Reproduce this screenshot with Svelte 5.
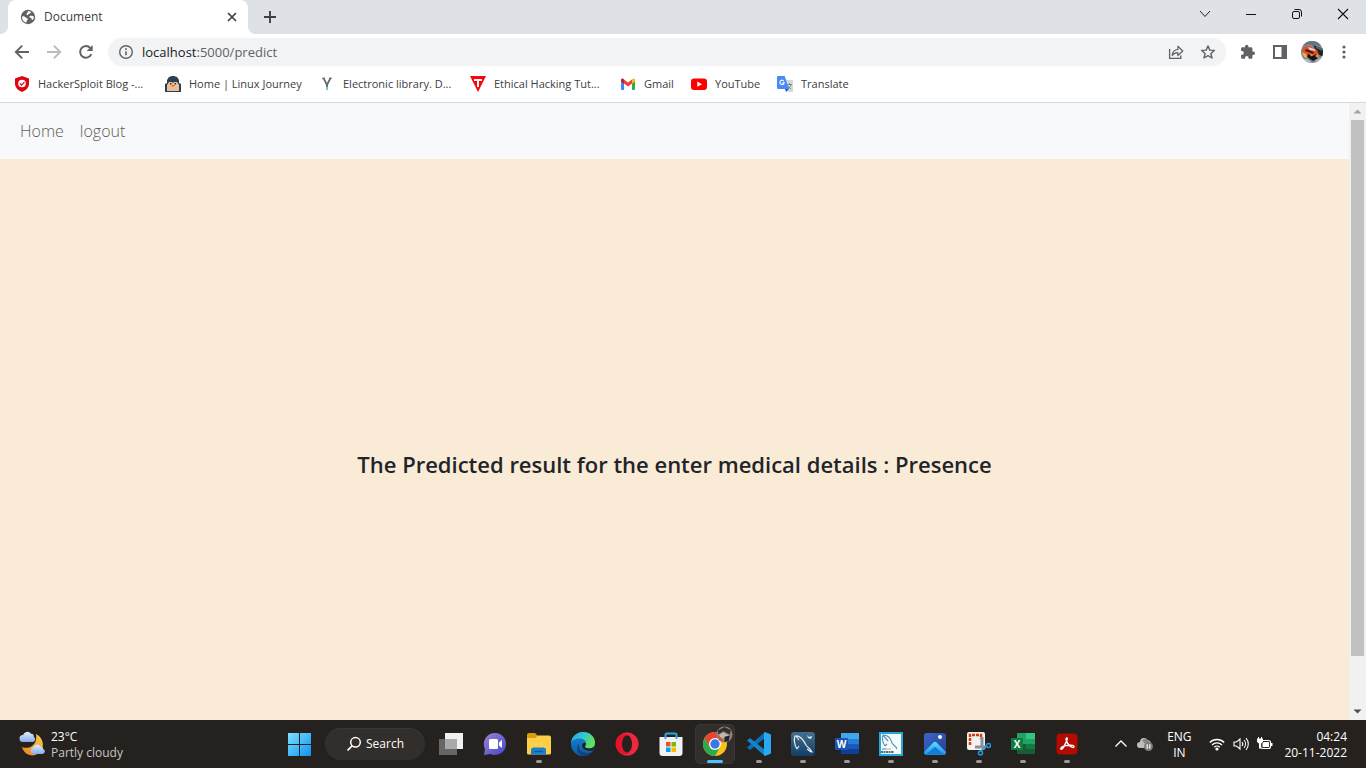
<script>
  let address = $state('localhost:5000/predict');
</script>

<div class="screen">
  <header class="browser">
    <div class="tabs">
      <div class="tab">
        <svg class="i16" viewBox="0 0 16 16" aria-hidden="true">
          <circle cx="8" cy="8" r="7.2" fill="#5f6368" />
          <path d="M2.2 7.2c1.8-.3 2.9.4 3.6 1.3.8 1 2 .4 1.9 1.8-.1 1.2-1.1 1-1.2 2.4v1A6 6 0 0 1 2.2 7.2zM8.2 2c1 .1 2.3.5 3.1 1-.9.5-.5 1.500-1.900 1.600-1 .1-.7 1.200-1.600 1.400-.7.2-1.300-.3-1.200-1 .1-1.400 1.300-1.200 1.600-3zM13.900 7.400c-1.700-1-4.400-.9-4.500.3 0 1.200 1.900.8 2.100 2 .1.800.5 1.200 1.100 1.300.9-1 1.400-2.200 1.300-3.600z" fill="#fff" />
        </svg>
        <span class="tab-title">Document</span>
        <button class="plain close" aria-label="Close tab">
          <svg class="i16" viewBox="0 0 16 16"><path d="M4 4l8 8M12 4l-8 8" stroke="#3c4043" stroke-width="1.7" /></svg>
        </button>
      </div>
      <button class="plain new-tab" aria-label="New tab">
        <svg class="i16" viewBox="0 0 16 16"><path d="M8 2v12M2 8h12" stroke="#3c4043" stroke-width="1.9" /></svg>
      </button>
      <div class="window-controls">
        <button class="plain" aria-label="Search tabs"><svg class="i16" viewBox="0 0 16 16"><path d="M3 5l5 5.500L13 5" fill="none" stroke="#222" /></svg></button>
        <button class="plain" aria-label="Minimize"><svg class="i16" viewBox="0 0 16 16"><path d="M3 8.500h10" stroke="#111" /></svg></button>
        <button class="plain" aria-label="Restore"><svg class="i16" viewBox="0 0 16 16"><rect x="3.500" y="5.500" width="7" height="7" rx="1.500" fill="none" stroke="#111" /><path d="M5.500 3.500H10A2.500 2.500 0 0 1 12.500 6v4.500" fill="none" stroke="#111" /></svg></button>
        <button class="plain" aria-label="Close window"><svg class="i16" viewBox="0 0 16 16"><path d="M3 3l10 10M13 3L3 13" stroke="#111" stroke-width="1.100" /></svg></button>
      </div>
    </div>

    <div class="toolbar">
      <button class="plain nav-btn" aria-label="Back"><svg class="i16" viewBox="0 0 16 16"><path d="M15 8H2M8.200 1.600L1.800 8l6.400 6.400" fill="none" stroke="#5f6368" stroke-width="1.900" /></svg></button>
      <button class="plain nav-btn" aria-label="Forward" disabled><svg class="i16" viewBox="0 0 16 16"><path d="M1 8h13M7.800 1.600L14.200 8l-6.400 6.400" fill="none" stroke="#babcbe" stroke-width="1.900" /></svg></button>
      <button class="plain nav-btn" aria-label="Reload"><svg class="i16" viewBox="0 0 16 16"><path d="M13.300 10.200A5.800 5.800 0 1 1 12.300 4" fill="none" stroke="#5f6368" stroke-width="2" /><path d="M14.700 1v6H8.700z" fill="#5f6368" /></svg></button>
      <div class="omnibox">
        <svg class="i16" viewBox="0 0 16 16" aria-hidden="true"><circle cx="8" cy="8" r="6.300" fill="none" stroke="#5f6368" stroke-width="1.400" /><path d="M8 7.200v4M8 4.300V6" stroke="#5f6368" stroke-width="1.600" /></svg>
        <div class="url-box">
          <span class="url" aria-hidden="true"><b>localhost</b>:5000/predict</span>
          <input class="url-input" aria-label="Address" bind:value={address} />
        </div>
        <button class="plain omni-btn" aria-label="Share this page"><svg class="i16" viewBox="0 0 16 16"><path d="M1.600 5v9.400h11.200v-3" fill="none" stroke="#5f6368" stroke-width="1.300" /><path d="M4.200 11.500c.3-3.700 2.300-5.800 5.700-6V2.300L14.800 7l-4.900 4.500V8.700c-2.500 0-4.300.8-5.700 2.800z" fill="none" stroke="#5f6368" stroke-width="1.200" stroke-linejoin="round" /></svg></button>
        <button class="plain omni-btn" aria-label="Bookmark this tab"><svg class="i16" viewBox="0 0 16 16"><path d="M8 1.900l1.800 4.200 4.600.4-3.500 3 1.100 4.500L8 11.600 4 14l1.100-4.500-3.500-3 4.600-.4z" fill="none" stroke="#5f6368" stroke-width="1.400" stroke-linejoin="round" /></svg></button>
      </div>
      <div class="actions">
        <button class="plain" aria-label="Extensions"><svg class="i16" viewBox="0 0 16 16"><path d="M13.300 7.500h-.9V4.600c0-.8-.6-1.400-1.400-1.400H8.400v-.8a1.700 1.700 0 0 0-3.400 0v.8H2.500c-.8 0-1.400.6-1.400 1.400v2.500H2a1.800 1.800 0 0 1 0 3.600h-.9v2.700c0 .8.6 1.400 1.400 1.400H5v-.9a1.800 1.800 0 0 1 3.600 0v.9H11c.8 0 1.400-.6 1.400-1.400v-2.500h.9a1.700 1.700 0 0 0 0-3.400z" fill="#5f6368" /></svg></button>
        <button class="plain" aria-label="Side panel"><svg class="i16" viewBox="0 0 16 16"><path d="M1 1h14v14H1zM3 3v10h6.500V3z" fill="#5f6368" fill-rule="evenodd" /></svg></button>
        <button class="plain" aria-label="Profile">
          <svg class="i22" viewBox="0 0 22 22">
            <clipPath id="face"><circle cx="11" cy="11" r="11" /></clipPath>
            <g clip-path="url(#face)">
              <path fill="#7f8791" d="M0 0h22v22H0z" />
              <path d="M0 0h22v5L6 3 0 6z" fill="#68717a" />
              <path d="M12 4l10 4v8l-5-3z" fill="#1d2328" />
              <path d="M15 5l7 3-1 2-6-3z" fill="#4b6b70" />
              <path d="M1 11l2-5 5-1 8 4 2 5-3 3-9-2z" fill="#e2502a" />
              <path d="M7 6l6 2 2 2-6-1z" fill="#f3d8c8" />
              <path d="M5 8l8 3-1 2-8-3z" fill="#40201e" />
              <path d="M1 11l4 2 2 4-4-1z" fill="#f3b23a" />
              <path d="M7 13l5 2 3-2 2 4-5 3-6-4z" fill="#17151a" />
              <path d="M9 13l3 1-2 1.500zM14 15l3-2v4z" fill="#ef9d2c" />
              <path d="M2 18l5 0 4 4H4zM14 20l5-3v5z" fill="#b2bbc4" />
            </g>
          </svg>
        </button>
        <button class="plain" aria-label="Browser menu"><svg class="i16" viewBox="0 0 16 16"><g fill="#5f6368"><circle cx="8" cy="3" r="1.600" /><circle cx="8" cy="8" r="1.600" /><circle cx="8" cy="13" r="1.600" /></g></svg></button>
      </div>
    </div>

    <nav class="bookmarks" aria-label="Bookmarks">
      <a href="#hackersploit">
        <svg class="i16" viewBox="0 0 16 16"><path d="M8 0l7 2.500v5C15 11.500 12 14.500 8 16 4 14.500 1 11.500 1 7.500v-5z" fill="#dc0613" /><circle cx="8" cy="7.500" r="3.800" fill="#fff" /><path d="M5.800 7.400l1.700 1.700 2.900-3" fill="none" stroke="#dc0613" stroke-width="1.300" /></svg>
        HackerSploit Blog -...
      </a>
      <a href="#linux-journey">
        <svg class="i16" viewBox="0 0 16 16"><path d="M0 16V8l2-1V4l2-3 3-1h2l3 1 2 3v3l2 1v8z" fill="#2c3e50" /><path d="M2 15V9l2-3h3l1 1 1-1h3l2 3v6z" fill="#eac09a" /><path d="M5 7h1.500v1.500H5zM9.500 7H11v1.500H9.500z" fill="#26333f" /><path d="M6 9h4L8 11z" fill="#df6c26" /></svg>
        Home | Linux Journey
      </a>
      <a href="#library">
        <svg class="i16" viewBox="0 0 16 16"><path d="M4.500 2L8 9l3.500-7" fill="none" stroke="#63686b" stroke-width="1.700" /><path d="M3 2.200h3M10 2.200h3" stroke="#63686b" /><path d="M8 8v3" stroke="#63686b" stroke-width="1.800" /><path d="M8 11v3" stroke="#69b9d4" stroke-width="1.800" /></svg>
        Electronic library. D...
      </a>
      <a href="#ethical-hacking">
        <svg class="i16" viewBox="0 0 16 16"><path d="M0 0h16L8 16z" fill="#fb0307" /><path d="M4 3h8v2H9v6H7V5H4z" fill="#fff" /></svg>
        Ethical Hacking Tut...
      </a>
      <a href="#gmail">
        <svg class="i16" viewBox="0 0 16 16"><path d="M1 4l3 2v8H2a1 1 0 0 1-1-1z" fill="#4285f4" /><path d="M12 6l3-2v9a1 1 0 0 1-1 1h-2z" fill="#34a853" /><path d="M4 3.500l4 3 4-3v4l-4 3-4-3z" fill="#ea4335" /><path d="M1 4c0-1.600 1.600-2 3-.7v4.400L1 5.500z" fill="#c5221f" /><path d="M15 4c0-1.600-1.600-2-3-.7v4.400l3-2.200z" fill="#fbbc04" /></svg>
        Gmail
      </a>
      <a href="#youtube">
        <svg class="i16" viewBox="0 0 16 16"><rect y="2.500" width="16" height="11.500" rx="3" fill="#f00" /><path d="M6.300 5.600v5.200L11 8.200z" fill="#fff" /></svg>
        YouTube
      </a>
      <a href="#translate">
        <svg class="i16" viewBox="0 0 16 16"><path d="M6 4h9a1 1 0 0 1 1 1v10a1 1 0 0 1-1 1h-4z" fill="#d4d7db" /><path d="M10 8.500h5M12.500 7v1.500M14 8.500c-.5 2-1.700 3.300-3 4.200M11 10c.6 1.200 1.700 2.200 3 3" fill="none" stroke="#6f7f86" stroke-width=".9" /><path d="M1 0h6.700L12 13H1a1 1 0 0 1-1-1V1a1 1 0 0 1 1-1z" fill="#4a8af4" /><path d="M8 13h4l-3 3z" fill="#2a56c6" /><path d="M7 5.300a2.200 2.200 0 1 0 .2 1.600H5.200" fill="none" stroke="#fff" stroke-width="1.100" /></svg>
        Translate
      </a>
    </nav>
  </header>

  <div class="viewport">
    <div class="page">
      <nav class="site-nav" aria-label="Site">
        <a href="#home">Home</a>
        <a href="#logout">logout</a>
      </nav>
      <main>
        <h1>The Predicted result for the enter medical details : Presence</h1>
      </main>
    </div>
    <div class="scrollbar" aria-hidden="true">
      <svg class="arrow" viewBox="0 0 17 17"><path d="M8.500 6.500l4 4h-8z" fill="#a3a3a3" /></svg>
      <div class="track"><div class="thumb"></div></div>
      <svg class="arrow" viewBox="0 0 17 17"><path d="M8.500 10.500l4-4h-8z" fill="#505050" /></svg>
    </div>
  </div>

  <footer class="taskbar">
    <button class="plain weather">
      <svg class="i26" viewBox="0 0 26 26" aria-hidden="true">
        <defs>
          <linearGradient id="moon" x1="1" y1="0" x2="0" y2="1"><stop stop-color="#f9cf4b" /><stop offset="1" stop-color="#ef7f1c" /></linearGradient>
          <linearGradient id="cloud" x2="0" y2="1"><stop stop-color="#e0edff" /><stop offset="1" stop-color="#86abea" /></linearGradient>
        </defs>
        <path d="M17 3c8 4 9 14 3 19s-15 2-17-6c7 3 16-2 14-13z" fill="url(#moon)" />
        <path d="M4 11a3.500 3.500 0 0 1 0-7 4.500 4.500 0 0 1 8-1.200c2.500.2 3 1.700 2.700 3a2.800 2.800 0 0 1-.7 5.200z" fill="url(#cloud)" />
        <path d="M14 23a3.400 3.400 0 0 1 0-6.500 4.200 4.200 0 0 1 7.500-1c2.400.3 2.800 1.600 2.500 2.600a2.500 2.500 0 0 1-.5 4.900z" fill="url(#cloud)" />
      </svg>
      <span class="lines"><span>23°C</span><span class="dim">Partly cloudy</span></span>
    </button>

    <div class="apps">
      <button class="plain app" aria-label="Start">
        <svg class="i24" viewBox="0 0 24 24"><defs><linearGradient id="win" x2="1" y2="1"><stop stop-color="#7ee0ff" /><stop offset="1" stop-color="#0d92f2" /></linearGradient></defs><path d="M1 1h11v11H1zM13 1h11v11H13zM1 13h11v11H1zM13 13h11v11H13z" fill="url(#win)" /></svg>
      </button>
      <button class="plain search">
        <svg class="i16" viewBox="0 0 16 16" aria-hidden="true"><circle cx="9.500" cy="6.300" r="4.800" fill="none" stroke="#fff" stroke-width="1.500" /><path d="M6 9.800l-4.500 4.700" stroke="#fff" stroke-width="1.700" /></svg>
        Search
      </button>
      <button class="plain app" aria-label="Task view">
        <svg class="i24" viewBox="0 0 24 24"><path d="M0 7h18v16H0z" fill="#666" /><path d="M6 1h18v16H6z" fill="#f1f1f1" /><path d="M6 7h12v10H6z" fill="#aaa" /></svg>
      </button>
      <button class="plain app" aria-label="Chat">
        <svg class="i24" viewBox="0 0 24 24"><defs><linearGradient id="chat" x2="1" y2="1"><stop stop-color="#9b83d8" /><stop offset="1" stop-color="#4249c4" /></linearGradient></defs><path d="M12 1a11 11 0 1 1-4.500 21L1 23l1-6A11 11 0 0 1 12 1z" fill="url(#chat)" /><rect x="6" y="7" width="9" height="10" rx="1.500" fill="#fff" /><path d="M16 10.500L19 8v8l-3-2.500z" fill="#fff" /></svg>
      </button>
      <button class="plain app open" aria-label="File Explorer">
        <svg class="i24" viewBox="0 0 24 24"><path d="M0 3a2 2 0 0 1 2-2h6l3 3v4H0z" fill="#d89b12" /><path d="M0 6h8l3-2.500h11a2 2 0 0 1 2 2V21a1.500 1.500 0 0 1-1.500 1.500h-21A1.500 1.500 0 0 1 0 21z" fill="#ffd047" /><path d="M4 22.500V18a2.500 2.500 0 0 1 2.500-2.500h10A2.500 2.500 0 0 1 19 18v4.500z" fill="#1b7ed0" /><path d="M7 19.500h9" stroke="#0c5ba4" stroke-width="1.200" /></svg>
      </button>
      <button class="plain app" aria-label="Edge">
        <svg class="i24" viewBox="0 0 24 24"><defs><linearGradient id="edge" x2="1" y2=".4"><stop stop-color="#2aa6e8" /><stop offset=".5" stop-color="#2fc7d2" /><stop offset="1" stop-color="#63e058" /></linearGradient><linearGradient id="edge2" x2="0" y2="1"><stop stop-color="#1689d8" /><stop offset="1" stop-color="#0c59a4" /></linearGradient></defs><circle cx="12" cy="12" r="12" fill="url(#edge2)" /><path d="M0 11C1 4 6 0 12 0c7 0 12 5 12 10.500 0 4-3 6-6 6s-4.500-1.200-4-2.500c1-1 1.200-2 1-3C14.500 8 12 6.500 9 6.500 5 6.500 1 8 0 11z" fill="url(#edge)" /><path d="M8 12c-1 5 3 9 8 9 2 0 4-.7 6-2-2 3-6 5-10 5-5-1-8-8-4-12z" fill="#14417f" /><path d="M15 11c.3 1.500-.3 2.300-1 3-.5 1.500 1.500 2.500 4 2.500 2 0 4-.7 5.500-2.500L22 18.500c-5 1.500-11-1-11-5 0-2 2-3.500 4-2.500z" fill="#25211f" /></svg>
      </button>
      <button class="plain app" aria-label="Opera">
        <svg class="i24" viewBox="0 0 24 24"><ellipse cx="12" cy="12" rx="11.500" ry="11.500" fill="#e3142b" /><path d="M12 .5a11.500 11.500 0 0 1 0 23c-2 0-4-1-5-2 7 3 10-3 10-9.500S14 0 7 2.500c1-1 3-2 5-2z" fill="#f2384a" opacity=".6" /><ellipse cx="12" cy="12" rx="5" ry="8.500" fill="#25211f" /></svg>
      </button>
      <button class="plain app" aria-label="Microsoft Store">
        <svg class="i24" viewBox="0 0 24 24"><path d="M.5 5h23v16a3 3 0 0 1-3 3h-17a3 3 0 0 1-3-3z" fill="#f1f2f4" /><path d="M6.500 7V3a1.500 1.500 0 0 1 1.500-1.500h8A1.500 1.500 0 0 1 17.500 3v4" fill="none" stroke="#2aabe8" stroke-width="2" /><path d="M7 10h4.500v4.500H7z" fill="#f25022" /><path d="M12.500 10H17v4.500h-4.500z" fill="#7fba00" /><path d="M7 15.500h4.500V20H7z" fill="#00a4ef" /><path d="M12.500 15.500H17V20h-4.500z" fill="#ffb900" /></svg>
      </button>
      <button class="plain app open active" aria-label="Chrome">
        <svg class="i24" viewBox="0 0 24 24"><circle cx="12" cy="12" r="12" fill="#fbc116" /><path d="M12 6h10.400A12 12 0 0 0 1.600 6l5.200 9z" fill="#ea4335" /><path d="M1.600 6A12 12 0 0 0 12 24l5.200-9L12 17.500 6.800 15z" fill="#2da94f" /><circle cx="12" cy="12" r="6" fill="#fff" /><circle cx="12" cy="12" r="4.700" fill="#3b78e7" /></svg>
        <svg class="profile-badge" viewBox="0 0 16 16"><circle cx="8" cy="8" r="7.500" fill="#8d8680" /><path d="M2 4l6-3 6 3-1 4-6-3-5 3z" fill="#30312f" /><path d="M3 8l4-2 5 3-2 3-6-1z" fill="#c7b5a9" /><path d="M2 9l3 2 2 4-4-2z" fill="#d84e34" /><path d="M8 10l5-1-1 5-4 1z" fill="#242426" /></svg>
      </button>
      <button class="plain app open" aria-label="Visual Studio Code">
        <svg class="i24" viewBox="0 0 24 24"><path d="M18 0v6L3 18l-3-2.500z" fill="#0a6fb5" /><path d="M3 6l15 12v6L0 8.500z" fill="#1283cc" /><path d="M18 0l6 2.500v19L18 24l-1-1V1z" fill="#2aa9f3" /></svg>
      </button>
      <button class="plain app open" aria-label="MySQL Workbench">
        <svg class="i24" viewBox="0 0 24 24"><defs><linearGradient id="sql" x2="0" y2="1"><stop stop-color="#456f8b" /><stop offset="1" stop-color="#123f68" /></linearGradient></defs><rect width="24" height="24" rx="3" fill="url(#sql)" /><path d="M6 17C3 12 3 7 4 4c5-1 8 3 11 9 1 2 4 3 6 7-2 0-3-2-5-3M8 14l-2 3M5 4l3 4" fill="none" stroke="#e1edf3" stroke-width="1.200" /><path d="M16 3l2 2 3-1-1 3-3-1z" fill="#e1edf3" /></svg>
      </button>
      <button class="plain app open" aria-label="Word">
        <svg class="i24" viewBox="0 0 24 24"><path d="M6 1h18v6H6z" fill="#41a5ee" /><path d="M6 7h18v5H6z" fill="#2b7cd3" /><path d="M6 12h18v5H6z" fill="#185abd" /><path d="M6 17h18v5H6z" fill="#103f91" /><rect y="6" width="13" height="12" rx="1" fill="#1b55b4" /><text x="6.500" y="15.500" text-anchor="middle" fill="#fff" font-size="10" font-weight="700">W</text></svg>
      </button>
      <button class="plain app open" aria-label="MySQL Installer">
        <svg class="i24" viewBox="0 0 24 24"><path d="M1 1h22v22H1z" fill="#f5fafc" stroke="#27a8dc" stroke-width="2" /><path d="M6 14C3 10 3 5 4 3c5 0 8 4 9 8 1 2 4 3 5 6M4 3l5 6M8 12l-2 2" fill="none" stroke="#5b93b0" stroke-width="1.200" /><path d="M3 17h4" stroke="#4387a6" /><path d="M7 17h5" stroke="#eca43c" /><path d="M2 20h13" stroke="#397795" stroke-width="2" stroke-dasharray="2 .5" /></svg>
      </button>
      <button class="plain app open" aria-label="Photos">
        <svg class="i24" viewBox="0 0 24 24"><defs><linearGradient id="sky" x2="1" y2="1"><stop stop-color="#3768c8" /><stop offset="1" stop-color="#2d3b96" /></linearGradient><linearGradient id="hill" x2="0" y2="1"><stop stop-color="#5de0fb" /><stop offset="1" stop-color="#1893e8" /></linearGradient></defs><rect x="1" y="1" width="22" height="22" rx="3" fill="url(#sky)" /><path d="M1 20L10.500 10.500q1.500-1.500 3 0L23 20a3 3 0 0 1-3 3H4a3 3 0 0 1-3-3z" fill="url(#hill)" /><path d="M3 22.500l8-7q1-.8 2 0l8 7z" fill="#157bd6" /><circle cx="17" cy="5" r="2" fill="#fff" /></svg>
      </button>
      <button class="plain app open" aria-label="Snipping Tool">
        <svg class="i24" viewBox="0 0 24 24"><rect width="18" height="18" rx="2" fill="#f2f2f2" /><path d="M3 13V3h11v4" fill="none" stroke="#d83b01" stroke-width="2.500" stroke-dasharray="3 1" /><path d="M15 5v11M8 15h11" stroke="#8c9196" stroke-width="3" /><circle cx="13.500" cy="21" r="2" fill="none" stroke="#2697dc" stroke-width="1.600" /><circle cx="21.500" cy="13.500" r="2" fill="none" stroke="#2697dc" stroke-width="1.600" /><path d="M14 19l3-3 3-2" fill="none" stroke="#2697dc" stroke-width="1.500" /></svg>
      </button>
      <button class="plain app open" aria-label="Excel">
        <svg class="i24" viewBox="0 0 24 24"><path d="M6 1h9v11H6z" fill="#21a366" /><path d="M15 1h9v6h-9z" fill="#33c481" /><path d="M15 7h9v5h-9z" fill="#21a366" /><path d="M6 12h9v10H6z" fill="#185c37" /><path d="M15 12h9v5h-9z" fill="#107c41" /><path d="M15 17h9v5h-9z" fill="#185c37" /><rect y="6" width="12" height="12" rx="1" fill="#107c41" /><text x="6" y="15.500" text-anchor="middle" fill="#fff" font-size="10" font-weight="700">X</text></svg>
      </button>
      <button class="plain app open" aria-label="Acrobat Reader">
        <svg class="i24" viewBox="0 0 24 24"><rect x="1.500" y="1.500" width="21" height="21" rx="4" fill="#b30b00" /><path d="M12 6c-2 0-.5 4 1.500 6.500s5.500 4 5.500 2-8-1.500-11 0-2.500 3.500-1 2.500S13.500 6 12 6z" fill="none" stroke="#fff" stroke-width="1.400" /></svg>
      </button>
    </div>

    <div class="tray">
      <button class="plain" aria-label="Show hidden icons"><svg class="i16" viewBox="0 0 16 16"><path d="M2.500 10.500L8 5l5.500 5.500" fill="none" stroke="#fff" stroke-width="1.300" /></svg></button>
      <button class="plain cloud" aria-label="OneDrive"><svg class="i16" viewBox="0 0 16 16"><path d="M3 12a3 3 0 0 1 0-6 4 4 0 0 1 7.500-2A4 4 0 0 1 14 8v4z" fill="#bdbdbd" /><path d="M5 4.500A4 4 0 0 1 12 5l2 3-4 1z" fill="#858585" /><circle cx="11.500" cy="10.500" r="4.500" fill="#7b7b7b" /><path d="M10.200 8.300v4.400M12.800 8.300v4.400" stroke="#fff" stroke-width="1.200" /></svg></button>
      <button class="plain lines lang"><span>ENG</span><span>IN</span></button>
      <button class="plain status" aria-label="Network, volume and battery">
        <svg class="i16" viewBox="0 0 16 16"><path d="M.8 6.500a10.200 10.200 0 0 1 14.400 0M3 9a7 7 0 0 1 10 0M5.200 11.300a4 4 0 0 1 5.600 0" fill="none" stroke="#fff" stroke-width="1.300" /><circle cx="8" cy="13" r="1.600" fill="#fff" /></svg>
        <svg class="i16" viewBox="0 0 16 16"><path d="M1 6h2.500L7 3v10l-3.500-3H1z" fill="none" stroke="#fff" stroke-width="1.100" /><path d="M9 6a3 3 0 0 1 0 4M11 4a6 6 0 0 1 0 8M13 2.200a8.500 8.500 0 0 1 0 11.600" fill="none" stroke="#fff" stroke-width="1.100" /></svg>
        <svg class="i16" viewBox="0 0 16 16"><rect x="3.500" y="4.500" width="10" height="8" rx="2" fill="none" stroke="#fff" stroke-width="1.200" /><path d="M5.500 7l1.500-1h5v5H5.500zM14 7h1.500v3H14z" fill="#fff" /><path d="M0 2.500h6V6L4 7.500v5H2v-5L0 6z" fill="#fff" /><path d="M1.500 1v2M4.500 1v2" stroke="#fff" /></svg>
      </button>
      <button class="plain lines clock"><span>04:24</span><span>20-11-2022</span></button>
    </div>
  </footer>
</div>

<style>
  :global(body) { margin: 0; }
  .screen {
    display: flex;
    flex-direction: column;
    min-height: 100vh;
    font: 12px/16px "Open Sans", "Noto Sans", sans-serif;
    color: #3c4043;
  }
  svg { display: block; flex: none; }
  .i16 { width: 16px; height: 16px; }
  .i22 { width: 22px; height: 22px; }
  .i24 { width: 24px; height: 24px; }
  .i26 { width: 26px; height: 26px; }
  .plain {
    display: flex;
    align-items: center;
    justify-content: center;
    padding: 0;
    border: 0;
    background: none;
    color: inherit;
    font: inherit;
  }
  a { color: inherit; text-decoration: none; }

  .browser { background: #fff; border-bottom: 1px solid #d6d9dc; }
  .tabs { display: flex; height: 34px; padding-left: 8px; background: #dee1e6; }
  .tab {
    position: relative;
    display: flex;
    align-items: center;
    gap: 8px;
    box-sizing: border-box;
    width: 240px;
    padding: 0 8px 0 12px;
    border-radius: 8px 8px 0 0;
    background: #fff;
  }
  .tab::before, .tab::after {
    content: "";
    position: absolute;
    bottom: 0;
    width: 8px;
    height: 8px;
  }
  .tab::before { right: 100%; background: radial-gradient(circle at 0 0, #dee1e6 8px, #fff 8px); }
  .tab::after { left: 100%; background: radial-gradient(circle at 100% 0, #dee1e6 8px, #fff 8px); }
  .tab-title { flex: 1; }
  .new-tab { width: 44px; }
  .window-controls { display: flex; margin-left: auto; align-items: center; height: 28px; }
  .window-controls button { width: 46px; }

  .toolbar { display: flex; align-items: center; height: 36px; padding: 0 6px; }
  .nav-btn { width: 32px; }
  .omnibox {
    display: flex;
    flex: 1;
    align-items: center;
    gap: 8px;
    height: 28px;
    margin-left: 6px;
    padding: 0 6px 0 10px;
    border-radius: 14px;
    background: #f1f3f4;
    font-size: 13px;
    color: #5f6368;
  }
  .url-box { display: grid; flex: 1; }
  .url, .url-input { grid-area: 1 / 1; }
  .url b { color: #202124; font-weight: 400; }
  .url-input { border: 0; padding: 0; background: none; font: inherit; color: transparent; caret-color: #202124; outline: 0; }
  .omni-btn { width: 24px; }
  .actions { display: flex; align-items: center; margin-left: 6px; }
  .actions button { width: 32px; }

  .bookmarks {
    display: grid;
    grid-template-columns: 151px 154px 151px 150px 71px 86px auto;
    height: 32px;
    padding: 0 14px;
    font-size: 11px;
  }
  .bookmarks a { display: flex; align-items: center; gap: 8px; height: 28px; white-space: nowrap; }

  .viewport { display: flex; flex: 1; }
  .page { display: flex; flex: 1; flex-direction: column; background: #faebd7; }
  .site-nav {
    display: flex;
    align-items: center;
    gap: 16px;
    height: 56px;
    padding: 0 20px;
    background: #f8f9fa;
    color: #5c5c5c;
    font-size: 16px;
    font-weight: 300;
    line-height: 24px;
  }
  main { display: flex; flex: 1; align-items: center; justify-content: center; padding-top: 48px; }
  h1 { margin: 0; color: #212529; font-size: 22px; line-height: 28px; font-weight: 600; }
  .scrollbar { display: flex; flex-direction: column; width: 17px; background: #f1f1f1; }
  .arrow { width: 17px; height: 17px; }
  .track { flex: 1; padding: 0 2px; }
  .thumb { height: 92%; background: #c1c1c1; }

  .taskbar {
    display: grid;
    grid-template-columns: 1fr auto 1fr;
    height: 48px;
    background: #25211f;
    color: #fff;
  }
  .lines { display: flex; flex-direction: column; text-align: left; }
  .taskbar .lines { padding-top: 2px; }
  .weather { justify-content: flex-start; gap: 6px; padding-left: 19px; }
  .dim { color: #c8c6c4; }
  .apps { display: flex; align-items: center; }
  .app { position: relative; width: 44px; height: 48px; }
  .app text { font-family: "Open Sans", sans-serif; }
  .open::after {
    content: "";
    position: absolute;
    bottom: 5px;
    left: 19px;
    width: 6px;
    height: 3px;
    border-radius: 2px;
    background: #9b9997;
  }
  .active::before {
    content: "";
    position: absolute;
    z-index: -1;
    inset: 4px 2px;
    border: 1px solid #3b3735;
    border-radius: 5px;
    background: #322e2b;
  }
  .active { z-index: 0; }
  .active::after { left: 14px; width: 16px; background: #4cc2ff; }
  .profile-badge { position: absolute; top: 6px; right: 4px; width: 17px; height: 17px; }
  .search {
    gap: 4px;
    width: 100px;
    height: 32px;
    margin: 0 4px;
    border-radius: 16px;
    background: #322e2b;
    box-shadow: inset 0 1px #3b3735;
  }
  .tray { display: flex; align-items: center; justify-content: flex-end; padding-right: 19px; }
  .cloud { margin-left: 8px; }
  .lang { width: 24px; margin: 0 18px 0 14px; align-items: center; }
  .status { gap: 8px; }
  .clock { align-items: flex-end; margin-left: 11px; }
</style>
